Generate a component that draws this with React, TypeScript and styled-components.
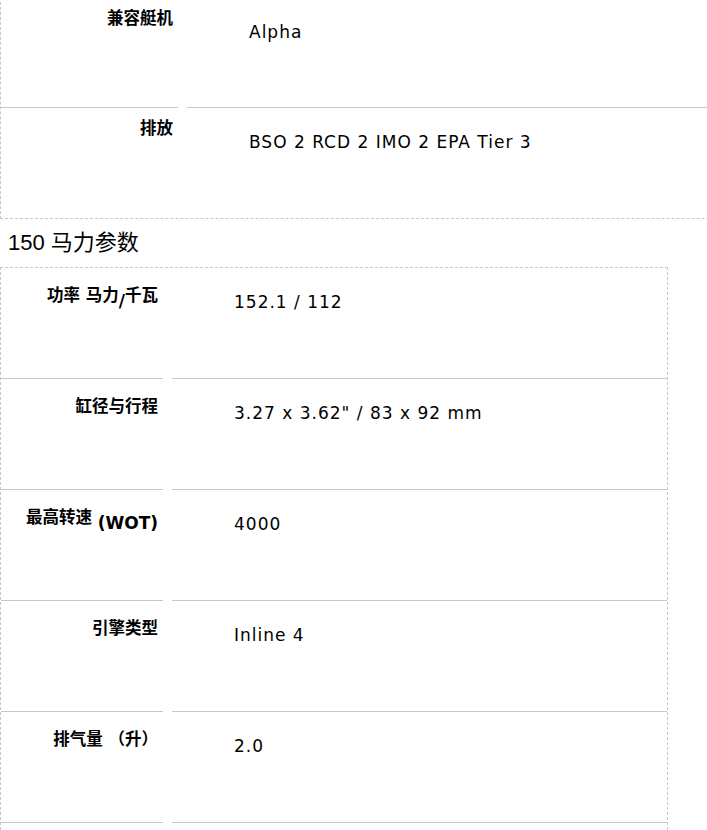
import React from 'react';
import styled, { createGlobalStyle } from 'styled-components';

const GlobalStyle = createGlobalStyle`
  html, body {
    margin: 0;
    padding: 0;
    background: #fff;
    overflow: hidden;
  }
  body {
    font-family: "Liberation Sans", "Noto Sans CJK SC", sans-serif;
    color: #000;
  }
`;

const Page = styled.div`
  width: 707px;
  height: 830px;
  overflow: hidden;
`;

const SpecTable = styled.div<{ $width: number; $offset?: number }>`
  width: ${p => p.$width}px;
  margin-top: ${p => p.$offset ?? 0}px;
  border: 1px dashed #c8c8c8;
  box-sizing: border-box;
`;

const Row = styled.div<{ $labelWidth: number; $height: number }>`
  display: grid;
  grid-template-columns: ${p => p.$labelWidth}px 1fr;
  column-gap: 9px;
  height: ${p => p.$height}px;

  &:not(:last-child) > * {
    border-bottom: 1px solid #c8c8c8;
  }
`;

const Label = styled.div<{ $top: number }>`
  box-sizing: border-box;
  padding: ${p => p.$top}px 5px 0 0;
  text-align: right;
  font-family: "DejaVu Sans", "Noto Sans CJK SC", sans-serif;
  font-size: 16.5px;
  font-weight: 700;
  line-height: 20px;
  white-space: nowrap;
`;

const Latin = styled.span`
  font-size: 17px;
  vertical-align: -6px;
`;

const Value = styled.div`
  box-sizing: border-box;
  padding: 24px 0 0 62px;
  font-family: "DejaVu Sans", sans-serif;
  font-size: 17px;
  letter-spacing: 1px;
  line-height: 20px;
  white-space: nowrap;
`;

const Heading = styled.h3`
  margin: 0;
  padding-left: 8px;
  height: 48px;
  font-size: 22px;
  font-weight: 400;
  line-height: 48px;
`;

type Spec = { label: React.ReactNode; value: string };

const general: Spec[] = [
  { label: '兼容艇机', value: 'Alpha' },
  { label: '排放', value: 'BSO 2 RCD 2 IMO 2 EPA Tier 3' },
];

const power: Spec[] = [
  { label: <>功率 马力<Latin>/</Latin>千瓦</>, value: '152.1 / 112' },
  { label: '缸径与行程', value: '3.27 x 3.62" / 83 x 92 mm' },
  { label: <>最高转速 <Latin>(WOT)</Latin></>, value: '4000' },
  { label: '引擎类型', value: 'Inline 4' },
  { label: '排气量 （升）', value: '2.0' },
  { label: '', value: '' },
];

const SpecRows = ({ rows, labelWidth, labelTop, rowHeight }: {
  rows: Spec[];
  labelWidth: number;
  labelTop: number;
  rowHeight: number;
}) => (
  <>
    {rows.map((r, i) => (
      <Row key={i} $labelWidth={labelWidth} $height={rowHeight}>
        <Label $top={labelTop}>{r.label}</Label>
        <Value>{r.value}</Value>
      </Row>
    ))}
  </>
);

export default function App() {
  return (
    <Page>
      <GlobalStyle />
      <SpecTable $width={900} $offset={-3}>
        <SpecRows rows={general} labelWidth={177} labelTop={11} rowHeight={110} />
      </SpecTable>
      <Heading>150 马力参数</Heading>
      <SpecTable $width={668}>
        <SpecRows rows={power} labelWidth={162} labelTop={18} rowHeight={111} />
      </SpecTable>
    </Page>
  );
}
